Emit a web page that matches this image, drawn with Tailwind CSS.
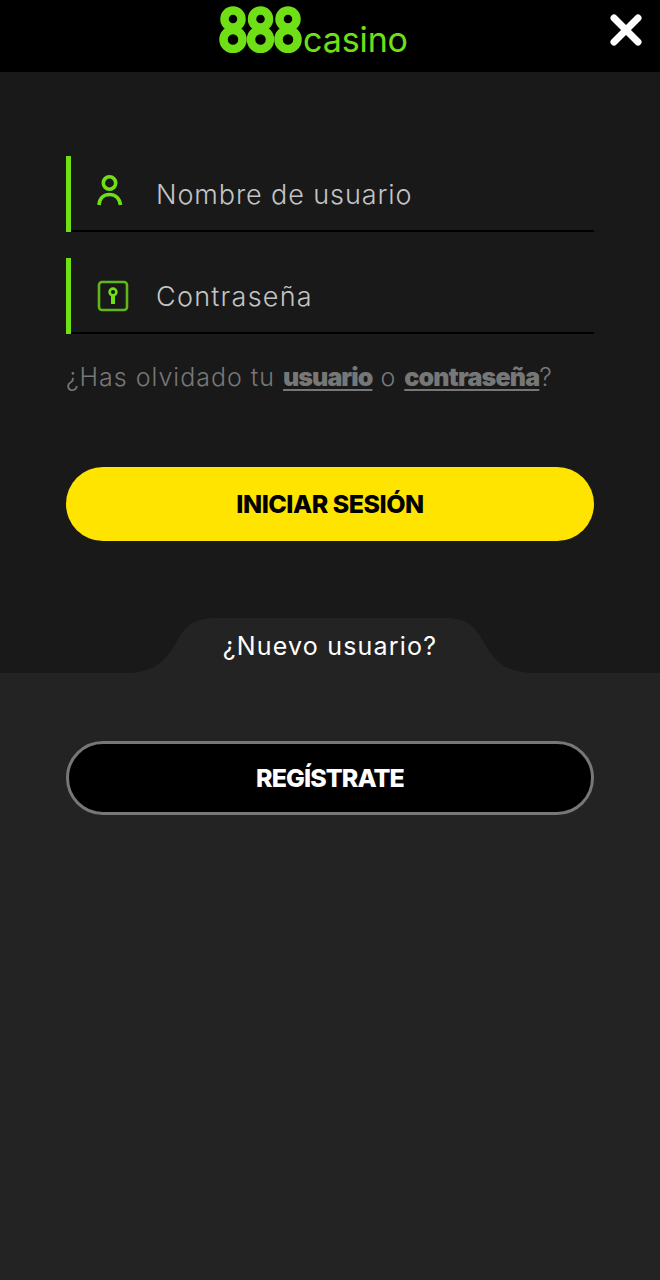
<!DOCTYPE html>
<html lang="es"><head><meta charset="utf-8"><script src="https://cdn.jsdelivr.net/npm/@tailwindcss/browser@4"></script></head>
<body class="bg-[#232323] font-['Inter',sans-serif]">
<div class="w-[660px] h-[1280px] flex flex-col overflow-hidden">
  <header class="relative h-[72px] bg-black flex-none">
    <div class="absolute left-[219px] top-[6px] flex items-end">
      <svg width="83" height="47" viewBox="0 0 83 47" role="img" aria-label="888" fill="none" stroke="#70e016" stroke-width="8.5">
        <circle cx="14" cy="13" r="8.5"/><circle cx="14" cy="33.5" r="9.5"/>
        <circle cx="41.5" cy="13" r="8.5"/><circle cx="41.5" cy="33.5" r="9.5"/>
        <circle cx="69" cy="13" r="8.5"/><circle cx="69" cy="33.5" r="9.5"/>
      </svg>
      <span class="ml-[1px] mb-[-7px] text-[34px] leading-[40px] tracking-[-0.1px] text-[#70e016] font-normal">casino</span>
    </div>
    <svg class="absolute left-[609px] top-[13px]" width="34" height="34" viewBox="0 0 34 34" fill="none" stroke="#fff" stroke-width="7" stroke-linecap="round"><path d="M5 5 L29 29 M29 5 L5 29"/></svg>
  </header>

  <section class="relative h-[601px] flex-none bg-[#191919] px-[66px] pt-[84px]">
    <div class="h-[76px] flex items-center border-l-[5px] border-[#70e016] relative">
      <span class="absolute left-0 right-0 bottom-0 h-[2px] bg-black"></span>
      <svg class="ml-[26px] w-[28px] h-[40px]" viewBox="0 0 28 40" fill="none" stroke="#70e016" stroke-width="3.6"><circle cx="12.5" cy="9" r="6.2"/><path d="M2 31 C2.5 24 7 20.5 12.5 20.5 C18 20.5 22.5 24 23.5 31"/></svg>
      <span class="ml-[31px] pt-[2px] text-[27px] tracking-[0.9px] font-light text-[#c4c4c4]">Nombre de usuario</span>
    </div>
    <div class="mt-[26px] h-[76px] flex items-center border-l-[5px] border-[#70e016] relative">
      <span class="absolute left-0 right-0 bottom-0 h-[2px] bg-black"></span>
      <svg class="ml-[26px] w-[32px] h-[32px]" viewBox="0 0 32 32" fill="none" stroke="#5fb818" stroke-width="2.6"><rect x="2" y="2" width="28" height="28" rx="3"/><circle cx="16" cy="12" r="3.4" stroke="#70e016" stroke-width="2.6"/><path d="M16 14 V24" stroke="#70e016" stroke-width="4"/></svg>
      <span class="ml-[27px] pt-[2px] text-[27px] tracking-[1.25px] font-light text-[#c4c4c4]">Contraseña</span>
    </div>
    <p class="mt-[26px] h-[34px] leading-[34px] text-[25px] tracking-[1px] font-light text-[#777] whitespace-nowrap">¿Has olvidado tu <a class="font-black underline underline-offset-[3px] decoration-2 text-[#777] tracking-[-0.95px]">usuario</a> o <a class="font-black underline underline-offset-[3px] decoration-2 text-[#777] tracking-[-0.8px]">contraseña</a>?</p>
    <button class="mt-[73px] pt-[2px] w-full h-[74px] rounded-full bg-[#ffe400] text-black text-[25px] font-extrabold tracking-[-0.5px]">INICIAR SESIÓN</button>
    <svg class="absolute left-[130px] bottom-0" width="400" height="56" viewBox="0 0 400 56" fill="#232323"><path d="M0 56 C28 54 36 42 46 26 C54 10 64 1 84 1 L316 1 C336 1 346 10 354 26 C364 42 372 54 400 56 Z"/></svg>
    <p class="absolute left-0 right-0 top-[556px] text-center text-[25px] leading-[36px] tracking-[1.2px] text-white">¿Nuevo usuario?</p>
  </section>

  <section class="flex-1 bg-[#232323] px-[66px] pt-[68px]">
    <button class="pt-[2px] w-full h-[74px] rounded-full bg-black border-[3px] border-[#777] text-white text-[25px] font-extrabold tracking-[-0.9px]">REGÍSTRATE</button>
  </section>
</div>
</body></html>
